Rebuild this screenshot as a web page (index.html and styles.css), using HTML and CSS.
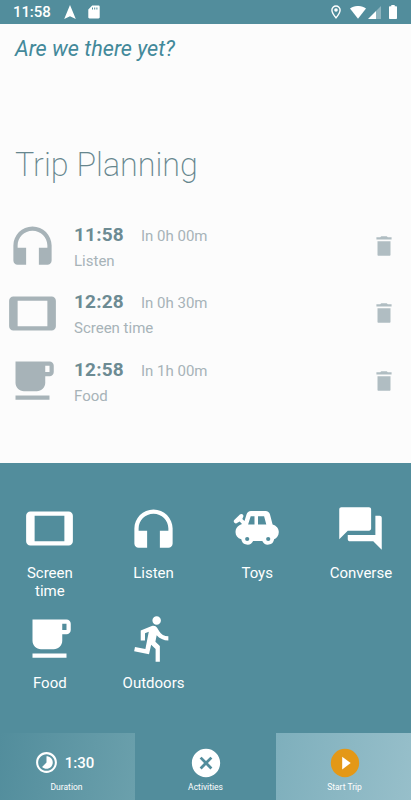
FILE: index.html
```
<!DOCTYPE html>
<html lang="en">
<head>
  <meta charset="UTF-8">
  <meta name="viewport" content="width=device-width, initial-scale=1.0">
  <title>Are we there yet?</title>
  <link rel="stylesheet" href="styles.css">
</head>
<body>
  <!-- shared icons -->
  <svg class="defs">
    <symbol id="headphones" viewBox="0 0 24 24"><path d="M12 3c-4.97 0-9 4.03-9 9v7c0 1.1.9 2 2 2h4v-8H5v-1c0-3.87 3.13-7 7-7s7 3.13 7 7v1h-4v8h4c1.1 0 2-.9 2-2v-7c0-4.97-4.03-9-9-9z"/></symbol>
    <symbol id="tablet" viewBox="0 0 24 24"><path d="M21 4H3c-1.1 0-2 .9-2 2v12c0 1.1.9 2 2 2h18c1.1 0 2-.9 2-2V6c0-1.1-.9-2-2-2zm-2 14H5V6h14v12z"/></symbol>
    <symbol id="cup" viewBox="0 0 24 24"><path d="M20 3H4v10c0 2.21 1.79 4 4 4h6c2.21 0 4-1.79 4-4v-3h2c1.11 0 2-.9 2-2V5c0-1.11-.89-2-2-2zm0 5h-2V5h2v3zM4 19h16v2H4v-2z"/></symbol>
    <symbol id="trash" viewBox="0 0 24 24"><path d="M6 20c0 .6.4 1 1 1h10c.6 0 1-.4 1-1V7.500H6zM19 4h-3.500l-1-1h-5l-1 1H5v2h14V4z"/></symbol>
  </svg>

  <div class="app">
    <header class="status">
      <span class="clock">11:58</span>
      <svg class="nav" viewBox="0 0 12 14"><path d="M6 0l5.8 14L6 11.2.2 14z"/></svg>
      <svg class="sd" viewBox="0 0 12 14"><path fill-rule="evenodd" d="M4.2.5h6.3c.7 0 1.2.5 1.2 1.2v10.6c0 .7-.5 1.2-1.2 1.2h-9c-.7 0-1.2-.5-1.2-1.2V4.5zM4 2.5v2h1v-2zm2.2 0v2h1v-2zm2.2 0v2h1v-2z"/></svg>
      <svg class="pin" viewBox="0 0 10 14"><path class="line" d="M5 1a4.100 4.100 0 0 0-4.100 4.100C.9 8 5 12.900 5 12.900s4.100-4.900 4.100-7.800A4.100 4.100 0 0 0 5 1z"/><circle cx="5" cy="5" r="1.8"/></svg>
      <svg class="wifi" viewBox="0 0 16 13"><path d="M0 2.6C4.5-.9 11.5-.9 16 2.6L8 12.8z"/></svg>
      <svg class="signal" viewBox="0 0 13 13"><path class="dim" d="M13 0v13H8V5z"/><path d="M8 5v8H0z"/></svg>
      <svg class="battery" viewBox="0 0 8 14"><path d="M2.3 0h3.4v1.2H7c.6 0 1 .4 1 1V13c0 .6-.4 1-1 1H1c-.6 0-1-.4-1-1V2.2c0-.6.4-1 1-1h1.3z"/></svg>
    </header>

    <main class="plan">
      <svg class="brand" viewBox="0 0 200 34"><text x="1" y="23" textLength="160" lengthAdjust="spacingAndGlyphs">Are we there yet?</text></svg>
      <h1>Trip Planning</h1>
      <ul class="trips">
        <li>
          <svg class="icon"><use href="#headphones"/></svg>
          <div class="info">
            <p><b>11:58</b><span>In 0h 00m</span></p>
            <p class="what">Listen</p>
          </div>
          <svg class="delete"><use href="#trash"/></svg>
        </li>
        <li>
          <svg class="icon"><use href="#tablet"/></svg>
          <div class="info">
            <p><b>12:28</b><span>In 0h 30m</span></p>
            <p class="what">Screen time</p>
          </div>
          <svg class="delete"><use href="#trash"/></svg>
        </li>
        <li>
          <svg class="icon"><use href="#cup"/></svg>
          <div class="info">
            <p><b>12:58</b><span>In 1h 00m</span></p>
            <p class="what">Food</p>
          </div>
          <svg class="delete"><use href="#trash"/></svg>
        </li>
      </ul>
    </main>

    <section class="activities">
      <div class="activity">
        <svg class="icon"><use href="#tablet"/></svg>
        <span>Screen<br>time</span>
      </div>
      <div class="activity">
        <svg class="icon"><use href="#headphones"/></svg>
        <span>Listen</span>
      </div>
      <div class="activity">
        <!-- wind-up car -->
        <svg class="icon" viewBox="0 0 51 51">
          <path fill-rule="evenodd" d="M19 8h14.500c2.300 0 3.900 1.200 4.500 3.500l2.600 10c3.600 1 6.200 4 6.200 7.400 0 3.500-2 6.300-4.700 7.400a6.200 6.200 0 0 1-11.800 1.700h-9.200a6.200 6.200 0 0 1-11.800-1.700C5.500 35.200 3.500 32.400 3.500 28.900c0-2.900 1.500-5.200 3.900-6.600l2.600-1.300-2.300-2.500-2.300 1.300a2.100 2.100 0 0 1-2.900-3.100l5.400-5.200a2.100 2.100 0 0 1 3.400 2.200l-1 2.300 2.200 2 2-6.500c.7-2.300 2.200-3.500 4.500-3.500zM18.700 13.300l-2.600 8.200h6.400v-8.200zm7.300 0v8.200h8.300l-2.200-8.200z"/>
          <circle class="hole" cx="15.200" cy="36" r="2.100"/>
          <circle class="hole" cx="36.200" cy="36" r="2.100"/>
        </svg>
        <span>Toys</span>
      </div>
      <div class="activity">
        <svg class="icon" viewBox="0 0 24 24"><path d="M21 6h-2v9H6v2c0 .55.45 1 1 1h11l4 4V7c0-.55-.45-1-1-1zm-4 6V3c0-.55-.45-1-1-1H3c-.55 0-1 .45-1 1v14l4-4h10c.55 0 1-.45 1-1z"/></svg>
        <span>Converse</span>
      </div>
      <div class="activity">
        <svg class="icon"><use href="#cup"/></svg>
        <span>Food</span>
      </div>
      <div class="activity">
        <svg class="icon" viewBox="0 0 24 24"><path d="M13.490 5.480c1.100 0 2-.9 2-2s-.9-2-2-2-2 .9-2 2 .9 2 2 2zm-3.600 13.900l1-4.400 2.100 2v6h2v-7.500l-2.100-2 .6-3c1.300 1.500 3.300 2.500 5.500 2.500v-2c-1.900 0-3.500-1-4.300-2.400l-1-1.600c-.4-.6-1-1-1.700-1-.3 0-.5.1-.8.1l-5.200 2.200v4.700h2v-3.400l1.800-.7-1.600 8.100-4.900-1-.4 2 7 1.400z"/></svg>
        <span>Outdoors</span>
      </div>
    </section>

    <footer class="bar">
      <div class="tab duration">
        <div class="top">
          <svg class="timer" viewBox="0 0 24 24"><path d="M16.240 7.760C15.070 6.590 13.540 6 12 6v6l-4.240 4.240c2.340 2.340 6.140 2.340 8.490 0 2.340-2.340 2.340-6.140-.01-8.480zM12 2C6.480 2 2 6.480 2 12s4.480 10 10 10 10-4.480 10-10S17.520 2 12 2zm0 18c-4.420 0-8-3.580-8-8s3.580-8 8-8 8 3.580 8 8-3.580 8-8 8z"/></svg>
          <b>1:30</b>
        </div>
        <span>Duration</span>
      </div>
      <div class="tab">
        <div class="top">
          <svg class="round" viewBox="0 0 24 24"><path d="M12 2C6.470 2 2 6.470 2 12s4.470 10 10 10 10-4.470 10-10S17.530 2 12 2zm4.500 13.100L15.100 16.500 12 13.410 8.900 16.500 7.500 15.100 10.590 12 7.500 8.900 8.900 7.500 12 10.590 15.100 7.500 16.500 8.900 13.410 12z"/></svg>
        </div>
        <span>Activities</span>
      </div>
      <div class="tab start">
        <div class="top">
          <svg class="round" viewBox="0 0 24 24"><circle class="orange" cx="12" cy="12" r="10"/><path d="M10 16.500l6-4.500-6-4.500z"/></svg>
        </div>
        <span>Start Trip</span>
      </div>
    </footer>
  </div>
</body>
</html>
```
FILE: styles.css
```
*{
  box-sizing: border-box;
}
body{
  margin: 0;
  font-family: Roboto, "Liberation Sans", sans-serif;
  background-color: #fcfcfc;
}
svg{
  display: block;
  flex-shrink: 0;
  fill: currentColor;
}
.defs{
  display: none;
}
.app{
  display: flex;
  flex-direction: column;
  width: 411px;
  height: 800px;
  overflow: hidden;
}
/* status bar */
.status{
  display: flex;
  align-items: center;
  height: 24px;
  padding: 0 14px 0 13px;
  background-color: #528d9c;
  color: white;
}
.clock{
  width: 51px;
  font-size: 15px;
  font-weight: 500;
  letter-spacing: -0.1px;
}
.nav{
  width: 12px;
  height: 14px;
}
.sd{
  width: 12px;
  height: 14px;
  margin-left: 12px;
}
.pin{
  width: 10px;
  height: 14px;
  margin-left: auto;
}
.line{
  fill: none;
  stroke: currentColor;
  stroke-width: 1.4;
}
.wifi{
  width: 16px;
  height: 13px;
  margin-left: 9px;
}
.signal{
  width: 13px;
  height: 13px;
  margin-left: 2px;
}
.dim{
  opacity: 0.35;
}
.battery{
  width: 8px;
  height: 14px;
  margin-left: 8px;
}
/* planned trips */
.plan{
  height: 438.5px;
  padding-top: 9px;
}
.brand{
  width: 200px;
  height: 34px;
  margin-left: 14px;
  overflow: visible;
  color: #43899a;
  font-size: 22px;
  font-style: italic;
}
h1{
  margin: 79px 0 0 15px;
  color: #66868e;
  font-size: 32.3px;
  font-weight: 200;
  line-height: 38px;
}
.trips{
  margin: 28px 0 0;
  padding: 0;
  list-style: none;
}
.trips li{
  display: flex;
  align-items: center;
  height: 67.6px;
  padding: 0 14.5px 0 6.5px;
  color: #a7b3b8;
}
.icon{
  width: 51px;
  height: 51px;
}
.info{
  flex: 1;
  margin-left: 16.5px;
  padding-top: 3px;
}
.info p{
  display: flex;
  align-items: baseline;
  margin: 0;
  font-size: 15px;
  line-height: 26px;
}
.info .what{
  line-height: 24px;
}
.info b{
  width: 67px;
  color: #6d8b93;
  font-size: 19px;
  letter-spacing: 0.2px;
}
.delete{
  width: 26px;
  height: 26px;
  color: #b0bdc2;
}
/* activity picker */
.activities{
  display: grid;
  grid-template-columns: repeat(4, 103.7px);
  grid-template-rows: 110px 110px;
  height: 270.5px;
  margin: 0 -2px;
  padding-top: 40.5px;
  background-color: #528d9c;
  color: white;
}
.activity{
  display: flex;
  flex-direction: column;
  align-items: center;
  font-size: 15px;
  line-height: 18px;
  text-align: center;
}
.activity span{
  margin-top: 10px;
}
.hole{
  fill: #528d9c;
}
/* bottom bar */
.bar{
  display: grid;
  grid-template-columns: 135px 141px 135px;
  height: 67px;
  background-color: #528d9c;
  color: white;
}
.tab{
  display: flex;
  flex-direction: column;
  align-items: center;
  padding-top: 12px;
  font-size: 8.5px;
  line-height: 12px;
}
.tab span{
  margin-top: 1px;
}
.top{
  display: flex;
  align-items: center;
  justify-content: center;
  height: 35px;
}
.top b{
  font-size: 15px;
  font-weight: 500;
}
.duration{
  padding-right: 2px;
  background: linear-gradient(100deg, #528d9c, #6ba0ac);
}
.duration .top{
  padding-right: 5px;
}
.start{
  padding-left: 2px;
  background: linear-gradient(100deg, #7eafbc, #97bfca);
}
.timer{
  width: 25px;
  height: 25px;
  margin-right: 6px;
}
.round{
  width: 34px;
  height: 34px;
}
.orange{
  fill: #e49817;
}
```
